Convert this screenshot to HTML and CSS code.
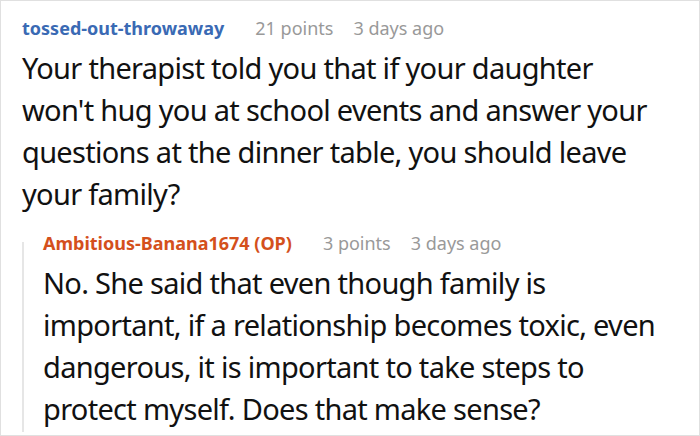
FILE: index.html
```html
<!DOCTYPE html>
<html>
<head>
<meta charset="utf-8">
<link rel="stylesheet" href="styles.css">
</head>
<body>
<div class="frame">
  <div class="comment">
    <div class="meta">
      <span class="author">tossed-out-throwaway</span>
      <span class="info">21 points</span>
      <span class="info">3 days ago</span>
    </div>
    <p class="body">Your therapist told you that if your daughter won't hug you at school events and answer your questions at the dinner table, you should leave your family?</p>
    <div class="reply">
      <div class="meta">
        <span class="author op">Ambitious-Banana1674 (OP)</span>
        <span class="info">3 points</span>
        <span class="info">3 days ago</span>
      </div>
      <p class="body">No. She said that even though family is important, if a relationship becomes toxic, even dangerous, it is important to take steps to protect myself. Does that make sense?</p>
    </div>
  </div>
</div>
</body>
</html>
```

FILE: styles.css
```css
* { box-sizing: border-box; }
html, body { margin: 0; padding: 0; background: #fff; }
.frame {
  width: 700px;
  height: 436px;
  border: 1px solid #e0e0e0;
  overflow: hidden;
  font-family: "Noto Sans", sans-serif;
  color: #111;
}
.comment { padding: 13px 30px 0 21px; }
.meta {
  display: flex;
  gap: 20px;
  font-size: 18px;
  line-height: 28px;
  white-space: nowrap;
}
.author { font-weight: bold; color: #3a6ab4; margin-right: 11px; }
.author.op { color: #d4501c; }
.info { color: #999; }
.body {
  margin: 5px 0 0;
  font-size: 29px;
  line-height: 42px;
  letter-spacing: -0.7px;
}
.reply {
  position: relative;
  margin-top: 14px;
  padding: 0 0 2px 21px;
}
.reply::before {
  content: "";
  position: absolute;
  left: 0;
  top: 13px;
  bottom: 0;
  width: 2px;
  background: #e6e6e6;
}
```
